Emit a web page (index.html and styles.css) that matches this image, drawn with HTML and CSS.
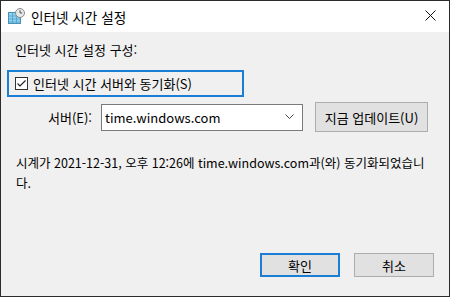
FILE: index.html
```html
<!DOCTYPE html>
<html lang="ko">
<head>
<meta charset="utf-8">
<link rel="stylesheet" href="styles.css">
</head>
<body>
<div class="window">
  <div class="titlebar">
    <svg class="app-icon" width="17" height="17" viewBox="0 0 17 17">
      <rect x="0.5" y="4.5" width="12" height="11" fill="#8fd3f0" stroke="#4a90b8"/>
      <path d="M1 8h11M1 11h11M1 14h11M4.5 5v10M8.5 5v10" stroke="#5aa9cf" stroke-width="1"/>
      <circle cx="12" cy="5" r="4.5" fill="#e8e8e8" stroke="#8a8a8a"/>
      <path d="M12 2.2V5h2.2" stroke="#555" fill="none" stroke-width="1"/>
    </svg>
    <span class="title">인터넷 시간 설정</span>
    <svg class="close" width="11" height="11" viewBox="0 0 11 11">
      <path d="M0.5 0.5L10.5 10.5M10.5 0.5L0.5 10.5" stroke="#111" stroke-width="1"/>
    </svg>
  </div>
  <div class="content">
    <div class="group-label">인터넷 시간 설정 구성:</div>
    <div class="sync-box">
      <span class="checkbox">
        <svg width="11" height="11" viewBox="0 0 11 11"><path d="M1.5 5.5L4 8L9.5 2.5" stroke="#222" stroke-width="1.2" fill="none"/></svg>
      </span>
      <span>인터넷 시간 서버와 동기화(S)</span>
    </div>
    <div class="server-row">
      <span class="server-label">서버(E):</span>
      <div class="select">
        <span>time.windows.com</span>
        <svg width="9" height="6" viewBox="0 0 9 6"><path d="M0.5 0.5L4.5 4.5L8.5 0.5" stroke="#444" fill="none"/></svg>
      </div>
      <div class="btn update">지금 업데이트(U)</div>
    </div>
    <p class="status">시계가 2021-12-31, 오후 12:26에 time.windows.com과(와) 동기화되었습니다.</p>
    <div class="footer">
      <div class="btn default">확인</div>
      <div class="btn">취소</div>
    </div>
  </div>
</div>
</body>
</html>
```

FILE: styles.css
```css
* { box-sizing: border-box; }
html, body { margin: 0; padding: 0; }
body {
  width: 450px;
  height: 297px;
  font-family: "Noto Sans CJK KR", "Noto Sans", sans-serif;
  font-size: 13px;
  color: #000;
}
.window {
  width: 450px;
  height: 297px;
  border: 1px solid #2b2b2b;
  background: #f0f0f0;
  display: flex;
  flex-direction: column;
}
.titlebar {
  height: 31px;
  background: #fff;
  display: flex;
  align-items: center;
  padding: 0 13px 0 7px;
}
.app-icon { margin-right: 6px; margin-top: -1px; }
.title { flex: 1; font-size: 13.6px; }
.close { margin-top: -2px; }
.content {
  flex: 1;
  display: flex;
  flex-direction: column;
  padding: 10px 15px 19px 14px;
}
.group-label { line-height: 16px; }
.sync-box {
  margin: 12px 0 0 -8px;
  width: 237px;
  height: 27px;
  border: 2px solid #1a7fd4;
  display: flex;
  align-items: center;
  padding-left: 6px;
  gap: 5px;
}
.checkbox {
  width: 13px;
  height: 13px;
  border: 1px solid #333;
  background: #fff;
  display: flex;
  align-items: center;
  justify-content: center;
}
.server-row {
  margin-top: 5px;
  display: flex;
  align-items: center;
  padding-left: 33px;
}
.server-label { width: 53px; }
.select {
  width: 202px;
  height: 27px;
  background: #fff;
  border: 1px solid #7a7a7a;
  display: flex;
  align-items: center;
  justify-content: space-between;
  padding: 0 8px 0 3px;
}
.btn {
  height: 24px;
  width: 80px;
  background: #e1e1e1;
  border: 1px solid #adadad;
  display: flex;
  align-items: center;
  justify-content: center;
}
.btn.update {
  width: 113px;
  height: 30px;
  margin-left: 12px;
}
.status {
  margin: 21px 0 0 1px;
  line-height: 20px;
  font-size: 12.5px;
  width: 410px;
}
.footer {
  margin-top: auto;
  display: flex;
  justify-content: flex-end;
  gap: 14px;
}
.btn.default { border: 2px solid #1a7fd4; }
```
